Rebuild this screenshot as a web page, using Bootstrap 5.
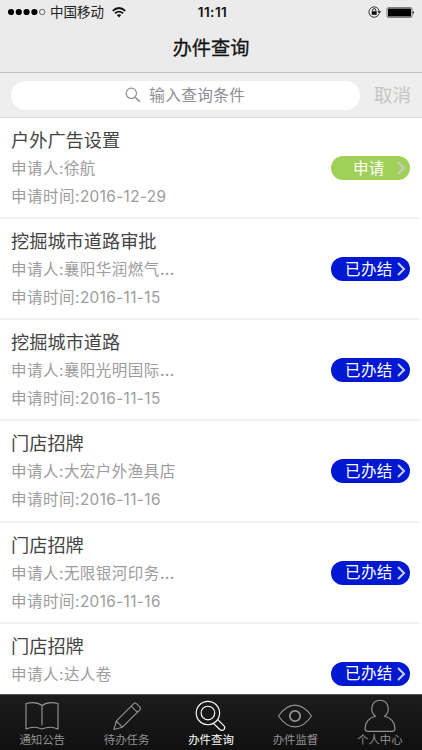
<!DOCTYPE html>
<html lang="zh-CN">
<head>
<meta charset="utf-8">
<meta name="viewport" content="width=device-width, initial-scale=1">
<title>办件查询</title>
<link href="https://cdn.jsdelivr.net/npm/bootstrap@5.3.0/dist/css/bootstrap.min.css" rel="stylesheet">
<style>
body{font-family:Inter,"Noto Sans CJK SC",sans-serif;height:750px;overflow:hidden;background:#fff}
svg{display:block;fill:none;flex:none}
.top-area{height:73px;background:#ebebeb;border-bottom:1px solid #c3c3c3}
.status{height:24px;padding:0 7px 0 8px;font-size:13.5px;line-height:24px;color:#222}
.status-side{width:150px}
.status-time{font-size:13.6px;font-weight:600;letter-spacing:.45px;padding-left:2px;color:#111}
.page-title{font-size:19.2px;line-height:49px;font-weight:400;color:#111;-webkit-text-stroke:.3px #111}
.search-area{height:45px;background:#eee;border-bottom:1px solid #dcdcdc;padding:0 11px 0 10.5px}
.search-field{width:349.5px;height:29px;font-size:15.6px;letter-spacing:.4px;color:#8e8e93;line-height:29px}
.cancel{font-size:18.5px;line-height:28px;padding-bottom:1px;color:#c5c5c5}
.record{height:101.15px;padding:8px 12.5px 0 11px;background:linear-gradient(#f2f2f2,#f2f2f2) left bottom/420px 2px no-repeat}
.record h2{font-size:18.2px;line-height:29px;color:#444;font-weight:400}
.detail{font-size:15.5px;letter-spacing:.48px;line-height:28px;color:#9c9c9c}
.detail .date{font-size:15.3px;letter-spacing:.4px}
.detail .more{letter-spacing:0;font-size:17px;line-height:1}
.state{width:79px;height:24px;margin-top:30px;font-size:15.5px;letter-spacing:.3px;line-height:24px;color:#fff;padding-right:2px}
.state span{padding-top:1px}
.applying{background:#a0d058}
.finished{background:#0018d2}
.tabs{height:56px;background:linear-gradient(#1c1c1c,#101010);border-top:1px solid #555}
.tab{color:#929292;font-size:11.4px;line-height:15px;padding-top:4px}
.tab svg{width:36px;height:34px;stroke:currentColor;stroke-width:1.15;stroke-linejoin:round;stroke-linecap:round}
.tab.active{color:#fff}
</style>
<script src="https://cdn.jsdelivr.net/npm/bootstrap@5.3.0/dist/js/bootstrap.bundle.min.js"></script>
</head>
<body class="d-flex flex-column">
<header class="top-area flex-shrink-0">
  <div class="status d-flex align-items-center justify-content-between">
    <div class="status-side d-flex align-items-center">
      <svg width="38" height="8" viewBox="0 0 38 8"><g fill="#000"><circle cx="3" cy="4" r="3.1"/><circle cx="10.8" cy="4" r="3.1"/><circle cx="18.6" cy="4" r="3.1"/><circle cx="26.4" cy="4" r="3.1"/></g><circle cx="34.2" cy="4" r="2.7" stroke="#333" stroke-width=".7"/></svg>
      <span class="ms-1">中国移动</span>
      <svg class="ms-2" width="14" height="11" viewBox="0 0 14 11" stroke="#111" stroke-width="1.8"><path d="M.7 3.8Q7-1.8 13.3 3.8M3 6.3Q7 2.9 11 6.3"/><path d="M4.8 8.1Q7 6.5 9.2 8.1L7 10.5Z" fill="#111" stroke="none"/></svg>
    </div>
    <span class="status-time">11:11</span>
    <div class="status-side d-flex align-items-center justify-content-end">
      <svg width="14" height="12" viewBox="0 0 14 12"><path d="M11 7.8A5.2 5.2 0 1 1 11.2 5" stroke="#333" stroke-width="1"/><path d="M9.2 5.2h4.2l-2.1 2.5z" fill="#222"/><path d="M4.6 5.5V4.2a1.6 1.6 0 0 1 3.2 0v1.3" stroke="#111" stroke-width=".9"/><path d="M3.7 5.3h5v3.5h-5z" fill="#111"/></svg>
      <svg class="ms-1" width="29" height="11" viewBox="0 0 29 11"><rect x="1" y=".6" width="25" height="9.8" rx="1.5" stroke="#555" stroke-width=".8"/><rect x="2" y="1.5" width="23" height="8" rx=".6" fill="#000"/><path d="M26.7 3.8q1.2.5 1.2 1.7t-1.2 1.7z" fill="#222"/></svg>
    </div>
  </div>
  <h1 class="page-title text-center mb-0">办件查询</h1>
</header>
<div class="search-area d-flex align-items-center justify-content-between flex-shrink-0">
  <div class="search-field bg-white rounded-pill d-flex align-items-center justify-content-center">
    <svg class="me-2" width="16" height="16" viewBox="0 0 16 16" stroke="#8e8e93" stroke-width="1.2"><circle cx="6.3" cy="6.3" r="5.2"/><path d="m10.2 10.2 4.6 4.5" stroke-width="1.6"/></svg>
    <span>输入查询条件</span>
  </div>
  <span class="cancel">取消</span>
</div>
<main class="flex-grow-1 overflow-hidden">
  <article class="record d-flex justify-content-between"><div><h2 class="mb-0">户外广告设置</h2><div class="detail">申请人:徐航</div><div class="detail">申请时间:<span class="date">2016-12-29</span></div></div><div class="state applying rounded-pill d-flex align-items-center justify-content-end"><span class="me-2 pe-1">申请</span><svg width="11" height="14" viewBox="0 0 11 14" stroke="#c7cdc7" stroke-width="2.1"><path d="m1 1 6 6-6 6"/></svg></div></article>
  <article class="record d-flex justify-content-between"><div><h2 class="mb-0">挖掘城市道路审批</h2><div class="detail">申请人:襄阳华润燃气<span class="more">…</span></div><div class="detail">申请时间:<span class="date">2016-11-15</span></div></div><div class="state finished rounded-pill d-flex align-items-center justify-content-end"><span class="me-1">已办结</span><svg width="11" height="14" viewBox="0 0 11 14" stroke="#c7cdf0" stroke-width="2.1"><path d="m1 1 6 6-6 6"/></svg></div></article>
  <article class="record d-flex justify-content-between"><div><h2 class="mb-0">挖掘城市道路</h2><div class="detail">申请人:襄阳光明国际<span class="more">…</span></div><div class="detail">申请时间:<span class="date">2016-11-15</span></div></div><div class="state finished rounded-pill d-flex align-items-center justify-content-end"><span class="me-1">已办结</span><svg width="11" height="14" viewBox="0 0 11 14" stroke="#c7cdf0" stroke-width="2.1"><path d="m1 1 6 6-6 6"/></svg></div></article>
  <article class="record d-flex justify-content-between"><div><h2 class="mb-0">门店招牌</h2><div class="detail">申请人:大宏户外渔具店</div><div class="detail">申请时间:<span class="date">2016-11-16</span></div></div><div class="state finished rounded-pill d-flex align-items-center justify-content-end"><span class="me-1">已办结</span><svg width="11" height="14" viewBox="0 0 11 14" stroke="#c7cdf0" stroke-width="2.1"><path d="m1 1 6 6-6 6"/></svg></div></article>
  <article class="record d-flex justify-content-between"><div><h2 class="mb-0">门店招牌</h2><div class="detail">申请人:无限银河印务<span class="more">…</span></div><div class="detail">申请时间:<span class="date">2016-11-16</span></div></div><div class="state finished rounded-pill d-flex align-items-center justify-content-end"><span class="me-1">已办结</span><svg width="11" height="14" viewBox="0 0 11 14" stroke="#c7cdf0" stroke-width="2.1"><path d="m1 1 6 6-6 6"/></svg></div></article>
  <article class="record d-flex justify-content-between"><div><h2 class="mb-0">门店招牌</h2><div class="detail">申请人:达人卷</div></div><div class="state finished rounded-pill d-flex align-items-center justify-content-end"><span class="me-1">已办结</span><svg width="11" height="14" viewBox="0 0 11 14" stroke="#c7cdf0" stroke-width="2.1"><path d="m1 1 6 6-6 6"/></svg></div></article>
</main>
<nav class="tabs row g-0 flex-shrink-0">
  <div class="tab col d-flex flex-column align-items-center"><svg viewBox="0 0 36 34"><path d="M18 6.5C14 3.3 7 3.3 2 4.5V30Q10 26.5 18 30Q26 26.5 34 30V4.5C29 3.3 22 3.3 18 6.5V26"/></svg><span>通知公告</span></div>
  <div class="tab col d-flex flex-column align-items-center"><svg viewBox="0 0 36 34"><path d="M5 30.5 7.3 22.2 24.7 4.6Q26 3.4 27.4 4.6L31 8.2Q32 9.5 30.8 10.8L13.4 28.2L5 30.5ZM7.3 22.2l6.1 6M22.2 7.1l6.2 6.2"/></svg><span>待办任务</span></div>
  <div class="tab active col d-flex flex-column align-items-center"><svg viewBox="0 0 36 34"><circle cx="14.9" cy="14" r="11.7"/><circle cx="14.9" cy="14" r="6.8"/><path d="m20.4 24.3 6.4 6.2c3 2.5 6.6-1 4-3.8l-6-6.1"/></svg><span>办件查询</span></div>
  <div class="tab col d-flex flex-column align-items-center"><svg viewBox="0 0 36 34"><path d="M1.5 17Q9 6.1 18 6.1T34.5 17Q27 27.9 18 27.9T1.5 17Z"/><circle cx="18" cy="17" r="5.2" stroke-width="1.8"/></svg><span>办件监督</span></div>
  <div class="tab col d-flex flex-column align-items-center"><svg viewBox="0 0 36 34"><path d="M13.5 17.2C7.5 13.3 8.8 1.2 18 1.2S28.5 13.3 22.5 17.2C29 18.6 33 23.5 33 29.5Q33 32.3 30 32.3H6Q3 32.3 3 29.5C3 23.5 7 18.6 13.5 17.2Z"/></svg><span>个人中心</span></div>
</nav>
</body>
</html>
